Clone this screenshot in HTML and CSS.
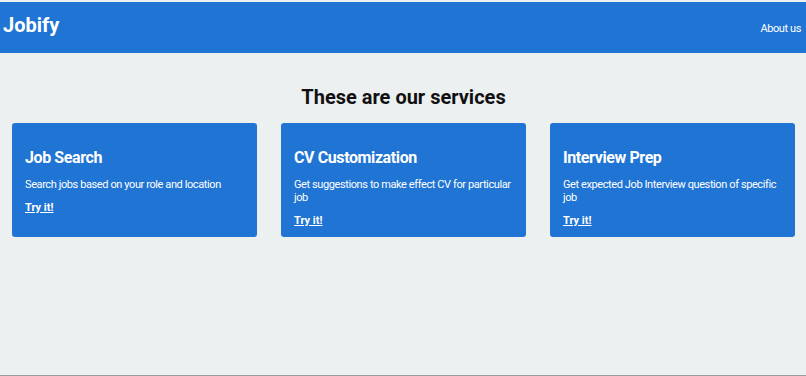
FILE: index.html
```html
<!DOCTYPE html>
<html lang="en">
<head>
    <meta charset="UTF-8">
    <meta name="viewport" content="width=device-width, initial-scale=1.0">
    <title>Jobify</title>
    <link rel="stylesheet" href="styles.css">
</head>
<body>
    <header class="navbar">
        <h1 class="logo">Jobify</h1>
        <a href="#" class="nav-link">About us</a>
    </header>

    <main class="services">
        <h2 class="services-title">These are our services</h2>
        <div class="service-grid">
            <div class="service-card">
                <h3>Job Search</h3>
                <p>Search jobs based on your role and location</p>
                <a href="#">Try it!</a>
            </div>
            <div class="service-card">
                <h3>CV Customization</h3>
                <p>Get suggestions to make effect CV for particular job</p>
                <a href="#">Try it!</a>
            </div>
            <div class="service-card">
                <h3>Interview Prep</h3>
                <p>Get expected Job Interview question of specific job</p>
                <a href="#">Try it!</a>
            </div>
        </div>
    </main>
</body>
</html>
```

FILE: styles.css
```css
* {
    box-sizing: border-box;
    margin: 0;
    padding: 0;
}

body {
    font-family: Roboto, "Liberation Sans", sans-serif;
    background: #ecf0f1;
    padding-top: 2px;
    min-height: 100vh;
    border-bottom: 1px solid #9a9d9f;
}

.navbar {
    display: flex;
    justify-content: space-between;
    align-items: center;
    height: 51px;
    padding: 0 5px 0 3px;
    background: #1f74d4;
    color: white;
}

.logo {
    font-size: 20px;
    font-weight: bold;
    margin-top: -6px;
}

.nav-link {
    color: white;
    text-decoration: none;
    font-size: 11px;
    letter-spacing: -0.4px;
    margin-top: 2px;
}

.services {
    padding: 32px 11px 0 12px;
}

.services-title {
    text-align: center;
    font-size: 20px;
    line-height: 24px;
    color: #111;
    margin-bottom: 14px;
}

.service-grid {
    display: grid;
    grid-template-columns: repeat(3, 1fr);
    gap: 24px;
}

.service-card {
    background: #1f74d4;
    color: white;
    border-radius: 3px;
    padding: 25px 13px 10px;
    line-height: 13px;
}

.service-card h3 {
    font-size: 16px;
    line-height: 20px;
    letter-spacing: -0.4px;
    margin-bottom: 10px;
}

.service-card p {
    font-size: 11px;
    line-height: 13px;
    letter-spacing: -0.4px;
    margin-bottom: 8px;
}

.service-card a {
    display: inline-block;
    color: white;
    font-size: 11px;
    line-height: 13px;
    font-weight: bold;
}
```
